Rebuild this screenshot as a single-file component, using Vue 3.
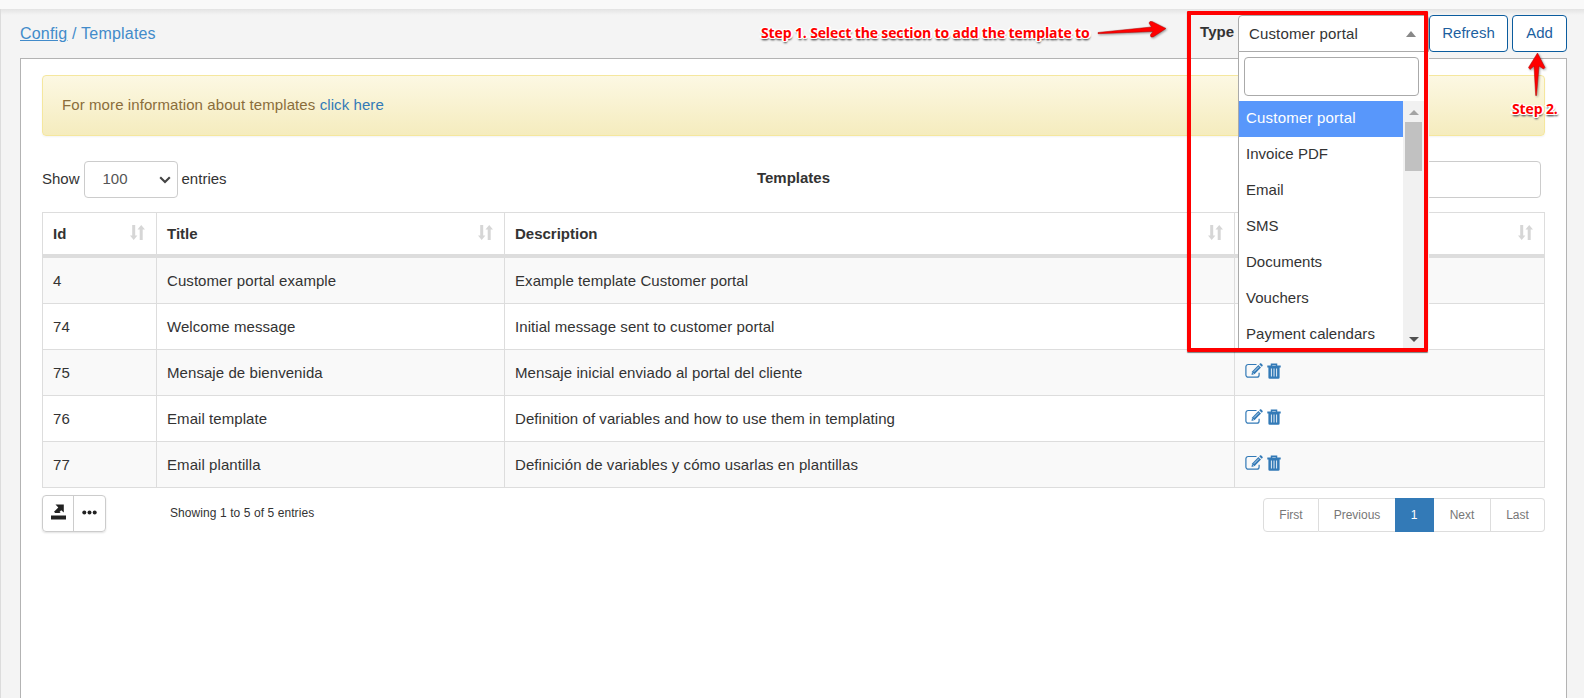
<script setup>
const columns = ['Id', 'Title', 'Description', '']
const rows = [
  { id: 4, title: 'Customer portal example', description: 'Example template Customer portal' },
  { id: 74, title: 'Welcome message', description: 'Initial message sent to customer portal' },
  { id: 75, title: 'Mensaje de bienvenida', description: 'Mensaje inicial enviado al portal del cliente' },
  { id: 76, title: 'Email template', description: 'Definition of variables and how to use them in templating' },
  { id: 77, title: 'Email plantilla', description: 'Definición de variables y cómo usarlas en plantillas' },
]
const options = ['Customer portal', 'Invoice PDF', 'Email', 'SMS', 'Documents', 'Vouchers', 'Payment calendars']
const pages = ['First', 'Previous', '1', 'Next', 'Last']
</script>

<template>
  <div class="page">
    <div class="topbar"></div>
    <main class="content">
      <header class="head">
        <nav class="crumbs"><a class="crumb-link">Config</a> / Templates</nav>
        <div class="tools">
          <label class="type-label">Type</label>
          <div class="select">
            <span>Customer portal</span>
            <i class="caret up"></i>
            <div class="dropdown">
              <div class="search-box"></div>
              <div class="list">
                <ul>
                  <li v-for="(o, i) in options" :key="o" :class="{ active: i === 0 }">{{ o }}</li>
                </ul>
                <div class="scrollbar">
                  <i class="caret up"></i>
                  <div class="thumb"></div>
                  <i class="caret down"></i>
                </div>
              </div>
            </div>
          </div>
          <button class="btn refresh">Refresh</button>
          <button class="btn add">Add</button>
        </div>
      </header>

      <section class="panel">
        <div class="alert">For more information about templates <a>click here</a></div>

        <div class="controls">
          <div class="length">
            <span>Show</span>
            <div class="length-select">
              <span>100</span>
              <svg width="12" height="8" viewBox="0 0 12 8"><path d="M1.200 1.200 6 6l4.800-4.800" fill="none" stroke="#444" stroke-width="2.100" /></svg>
            </div>
            <span>entries</span>
          </div>
          <strong class="caption">Templates</strong>
          <div class="filter"></div>
        </div>

        <table class="grid">
          <colgroup><col class="c1" /><col class="c2" /><col class="c3" /><col class="c4" /></colgroup>
          <thead>
            <tr>
              <th v-for="(c, i) in columns" :key="i">
                <div class="th">
                  <span>{{ c }}</span>
                  <svg width="15" height="15" viewBox="0 0 15 15" fill="#d6d6d6">
                    <path d="M2.200 0h3v10.500h2.200L3.700 15 0 10.500h2.200zM9.700 15h3V4.500H15L11.200 0 7.500 4.500h2.200z" />
                  </svg>
                </div>
              </th>
            </tr>
          </thead>
          <tbody>
            <tr v-for="r in rows" :key="r.id">
              <td>{{ r.id }}</td>
              <td>{{ r.title }}</td>
              <td>{{ r.description }}</td>
              <td>
                <div class="actions">
                  <svg width="18" height="16" viewBox="0 0 18 16">
                    <path d="M11.500 1.500H3.200a2.300 2.300 0 0 0-2.300 2.300v8.100a2.300 2.300 0 0 0 2.300 2.300h8.600a2.300 2.300 0 0 0 2.300-2.300V9.800" fill="none" stroke="#337ab7" stroke-width="1.200" />
                    <path d="M6.500 12l.6-3.600L13.400 2l2.600 2.500L9.700 11z" fill="#337ab7" />
                    <path d="M14.200 1.300l.8-.8c.4-.4.900-.4 1.300 0l1.200 1.200c.4.400.4.900 0 1.300l-.8.800z" fill="#337ab7" />
                    <path d="M8.900 8.700l5-5M7.500 9.600l1.200 1.200" stroke="#fff" stroke-width=".7" />
                  </svg>
                  <svg width="14" height="16" viewBox="0 0 14 16">
                    <path d="M4.500 3V1.200h5V3" fill="none" stroke="#337ab7" stroke-width="1.500" />
                    <path d="M.3 2.500h13.400v1.900H.3zM1.400 4.400h11.200V14.500a1.300 1.300 0 0 1-1.300 1.300H2.700a1.300 1.300 0 0 1-1.300-1.300z" fill="#337ab7" />
                    <path d="M4.400 5.500v8M7 5.500v8M9.600 5.500v8" stroke="#e4edf5" stroke-width="1" />
                  </svg>
                </div>
              </td>
            </tr>
          </tbody>
        </table>

        <footer class="foot">
          <div class="group">
            <button>
              <svg width="15" height="16" viewBox="0 0 15 16" fill="#222">
                <path d="M0 11.500h15V15.500H0zM4.500.5h8.300v8L10.200 6.200 8.500 7.900 9.700 9H4.200L3 7.800 7.300 3.500z" />
              </svg>
            </button>
            <button>
              <svg width="15" height="5" viewBox="0 0 15 5" fill="#222"><circle cx="2.300" cy="2.500" r="2" /><circle cx="7.500" cy="2.500" r="2" /><circle cx="12.700" cy="2.500" r="2" /></svg>
            </button>
          </div>
          <span class="info">Showing 1 to 5 of 5 entries</span>
          <ul class="pages">
            <li v-for="p in pages" :key="p" :class="['p-' + p.toLowerCase(), { current: p === '1' }]">{{ p }}</li>
          </ul>
        </footer>
      </section>
    </main>

    <div class="mark frame"></div>
    <div class="mark note step1">Step 1. Select the section to add the template to</div>
    <div class="mark note step2">Step 2.</div>
    <svg class="mark arrow1" width="72" height="22" viewBox="0 0 72 22">
      <path d="M1 12.500 54.500 7 52 3 53 1.500 55 1.500 69 8.500 56 17 54 17 53.300 15 56 11.500 1 13.700z" fill="#f00" stroke="#b00000" stroke-width=".5" />
    </svg>
    <svg class="mark arrow2" width="20" height="46" viewBox="0 0 20 46">
      <path d="M10.500 1 18 15.500 16.500 17 12 14 9.500 43.500H8.700L7 14 3 17.500 1.500 15.500z" fill="#f00" stroke="#b00000" stroke-width=".5" />
    </svg>
  </div>
</template>

<style>
body { margin: 0; overflow: hidden; }
</style>

<style scoped>
* { box-sizing: border-box; }
.page {
  position: relative;
  width: 1584px;
  height: 698px;
  overflow: hidden;
  background: #f4f4f4;
  color: #333;
  font: 15px/21px "Liberation Sans", Arial, sans-serif;
  display: flex;
  flex-direction: column;
}
.topbar { height: 9px; background: #f9f9f9; flex: none; }
.content {
  flex: 1;
  min-height: 0;
  padding: 6px 17px 0 19px;
  border-left: 1px solid #dcdcdc;
  background: linear-gradient(#e3e3e3, #f4f4f4 6px);
  display: flex;
  flex-direction: column;
}
.head { display: flex; justify-content: space-between; height: 43px; flex: none; }
.crumbs { color: #428bca; padding-top: 8px; font-size: 16px; letter-spacing: 0.2px; }
.crumb-link { text-decoration: underline; }
.tools { display: flex; align-items: flex-start; }
.type-label { font-weight: bold; padding: 6px 4px 0 0; }
.select {
  position: relative;
  width: 191px;
  height: 37px;
  padding: 0 12px 0 10px;
  background: #fff;
  border: 1px solid #aaa;
  border-radius: 4px 4px 0 0;
  display: flex;
  align-items: center;
  justify-content: space-between;
  letter-spacing: 0.15px;
}
.caret { width: 0; height: 0; border: 5px solid transparent; }
.caret.up { border-top: 0; border-bottom: 6px solid #888; }
.caret.down { border-bottom: 0; border-top: 5px solid #505050; }
.dropdown {
  position: absolute;
  left: -1px;
  top: 36px;
  width: 191px;
  height: 300px;
  background: #fff;
  border-left: 1px solid #aaa;
  z-index: 2;
  padding-top: 5px;
}
.search-box {
  width: 175px;
  height: 39px;
  margin: 0 0 5px 5px;
  border: 1px solid #aaa;
  border-radius: 4px;
}
.list { display: flex; height: 247px; overflow: hidden; letter-spacing: 0; }
.list ul { list-style: none; margin: 0; padding: 0; width: 164px; }
.list li { height: 36px; padding: 6px 7px; white-space: nowrap; letter-spacing: 0.03px; }
.list li.active { background: #5897fb; color: #fff; letter-spacing: 0.2px; }
.scrollbar {
  width: 21px;
  background: #f1f1f1;
  display: flex;
  flex-direction: column;
  align-items: center;
  padding: 9px 0 6px;
}
.thumb { width: 17px; height: 49px; margin: 7px 0 auto; background: #c1c1c1; }
.scrollbar .caret.up { border-bottom-width: 5px; border-bottom-color: #a3a3a3; }
.btn {
  height: 37px;
  border: 1px solid #0b5c9e;
  border-radius: 4px;
  background: #fff;
  color: #1d5f9f;
  font: inherit;
  padding: 0 0 2px;
}
.refresh { width: 79px; margin-right: 4px; }
.add { width: 55px; }
.panel {
  flex: 1;
  background: #fff;
  border: 1px solid #b3b3b3;
  border-bottom: 0;
  padding: 16px 21px 0;
}
.alert {
  height: 61px;
  padding: 18px 19px;
  border: 1px solid #f5e79e;
  border-radius: 4px;
  background: linear-gradient(#fcf8e3, #f5ecbe);
  box-shadow: 0 1px 2px rgba(0, 0, 0, .05);
  color: #8a6d3b;
  letter-spacing: 0.09px;
}
.alert a { color: #337ab7; }
.controls {
  display: grid;
  grid-template-columns: 1fr auto 1fr;
  margin-top: 25px;
  height: 37px;
}
.length { display: flex; align-items: center; gap: 4px; }
.length span { padding-bottom: 2px; }
.length-select {
  width: 94px;
  height: 37px;
  padding: 0 6px 0 18px;
  border: 1px solid #ccc;
  border-radius: 4px;
  display: flex;
  align-items: center;
  justify-content: space-between;
  color: #555;
}
.caption { padding: 6px 0; }
.filter {
  justify-self: end;
  width: 200px;
  margin-right: 4px;
  border: 1px solid #ccc;
  border-radius: 4px;
}
.grid {
  width: 1503px;
  margin-top: 14px;
  table-layout: fixed;
  border-collapse: separate;
  border-spacing: 0;
  border: solid #ddd;
  border-width: 1px 0 0 1px;
}
.c1 { width: 114px; }
.c2 { width: 348px; }
.c3 { width: 730px; }
.grid th, .grid td { padding: 0 10px; text-align: left; border-right: 1px solid #ddd; }
.grid th { height: 45px; border-bottom: 4px solid #ddd; }
.grid td { height: 46px; border-bottom: 1px solid #ddd; padding-bottom: 1px; letter-spacing: 0.07px; }
.grid tbody tr:nth-child(odd) { background: #f9f9f9; }
.th { display: flex; align-items: center; justify-content: space-between; }
.th svg { position: relative; top: -1px; left: -1px; }
.actions { display: flex; gap: 4px; align-items: center; padding-bottom: 2px; }
.foot { display: flex; align-items: flex-start; margin-top: 7px; font-size: 12px; }
.group {
  display: flex;
  border: 1px solid #ccc;
  border-radius: 4px;
  box-shadow: 0 1px 2px rgba(0, 0, 0, .12);
  height: 37px;
  width: 64px;
}
.group button {
  width: 30px;
  border: 0;
  background: none;
  padding: 0 0 3px;
  display: flex;
  align-items: center;
  justify-content: center;
}
.group button + button { width: 32px; border-left: 1px solid #ccc; }
.info { margin: 8px 0 0 64px; letter-spacing: 0.08px; }
.pages {
  list-style: none;
  margin: 3px 0 0 auto;
  padding: 0;
  display: flex;
  height: 34px;
  color: #777;
}
.pages li {
  border: 1px solid #ddd;
  border-left-width: 0;
  display: flex;
  align-items: center;
  justify-content: center;
}
.pages .p-first { border-left-width: 1px; border-radius: 4px 0 0 4px; width: 56px; }
.pages .p-previous { width: 76px; border-right: 0; }
.pages .current { width: 39px; background: #337ab7; border-color: #337ab7; color: #fff; }
.pages .p-next { width: 57px; }
.pages .p-last { width: 54px; border-radius: 0 4px 4px 0; }
.mark { position: absolute; z-index: 5; }
.frame { left: 1187px; top: 11px; width: 241px; height: 341px; border: 4px solid #f00; box-shadow: 0 1px 1px rgba(0, 0, 0, .5); border-radius: 1px; }
.note {
  color: #f00;
  font: bold 14px/20px "Open Sans", "Noto Sans", sans-serif;
  letter-spacing: -0.13px;
  white-space: nowrap;
  text-shadow: 1px 1px #fff, -1px -1px #fff, 1px -1px #fff, -1px 1px #fff, 2px 0 #fff, -2px 0 #fff, 0 2px 2px #666, 1px 2px 2px #666;
}
.step1 { left: 761px; top: 23px; }
.step2 { left: 1512px; top: 99px; }
.arrow1 { left: 1097px; top: 20px; filter: drop-shadow(1px 1px 1px rgba(0, 0, 0, .4)); }
.arrow2 { left: 1527px; top: 52px; filter: drop-shadow(1px 1px 1px rgba(0, 0, 0, .4)); }
</style>
